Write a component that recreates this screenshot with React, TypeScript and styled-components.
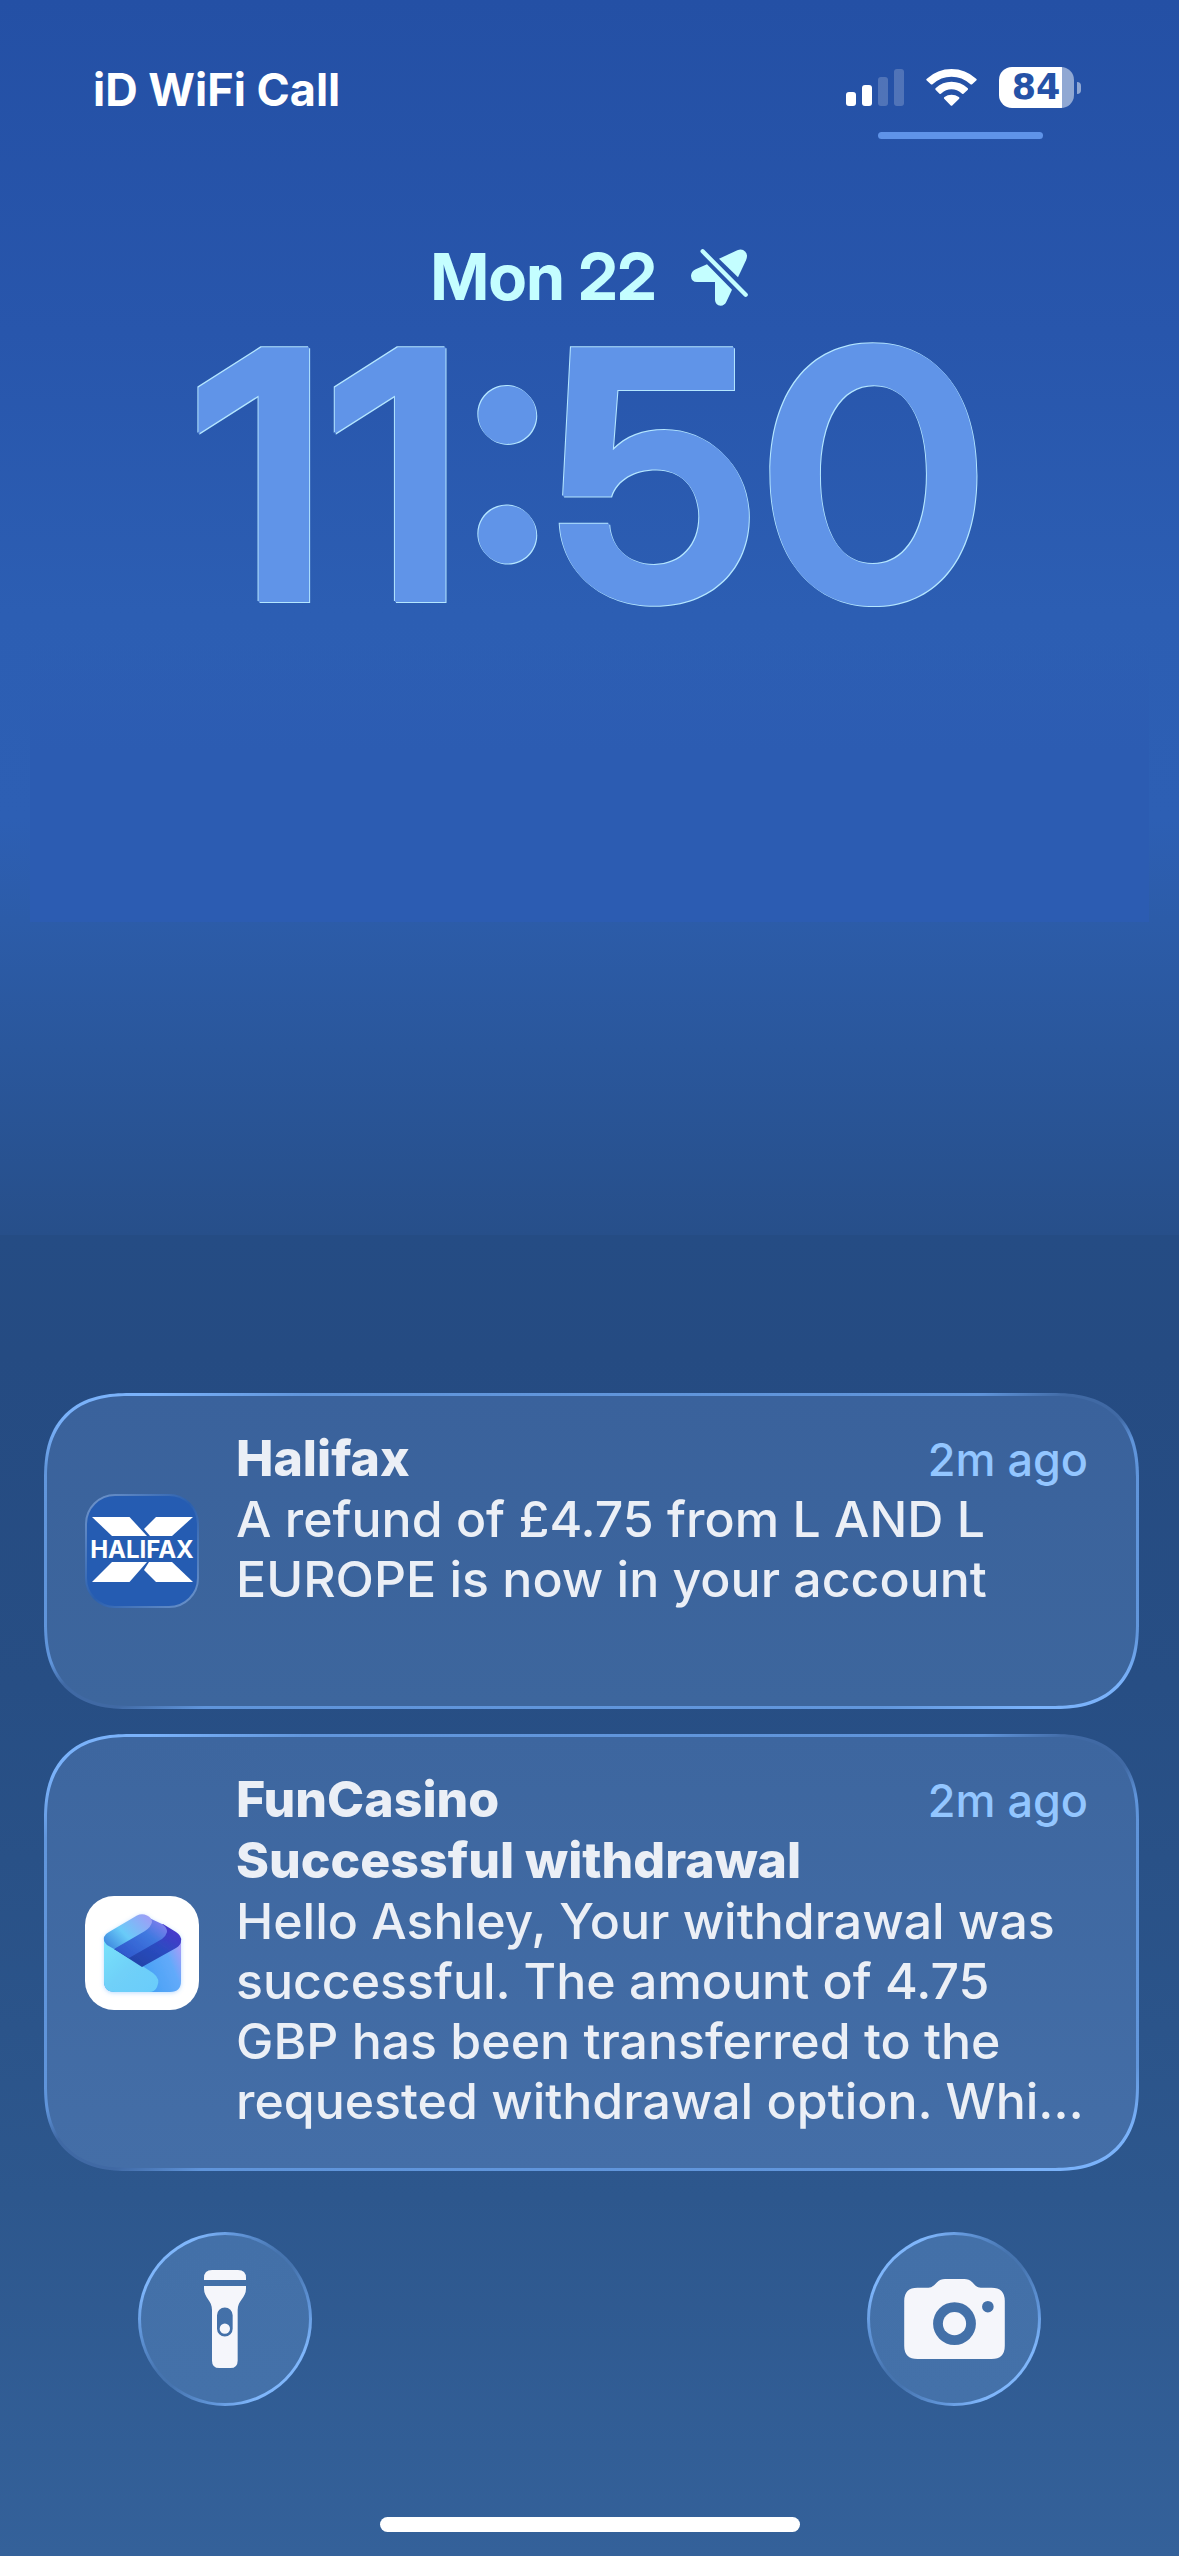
import React from 'react';
import styled, { createGlobalStyle, css } from 'styled-components';

const GlobalStyle = createGlobalStyle`
  *, *::before, *::after { box-sizing: border-box; }
  html, body { margin: 0; padding: 0; background: #34619a; }
  body { font-family: Inter, "Liberation Sans", Arial, sans-serif; }
  h1, h2, h3, p { margin: 0; font: inherit; }
`;

const displayFont = css`
  font-family: "Inter Display", Inter, "Liberation Sans", Arial, sans-serif;
`;

const glassRing = css`
  border: 3px solid transparent;
`;

const Screen = styled.main`
  display: flex;
  flex-direction: column;
  min-height: 100vh;
  padding-bottom: 24px;
  background: linear-gradient(
    180deg,
    #2450a5 0%,
    #2856ac 13%,
    #2c5eb3 24%,
    #2d5fb4 32%,
    #2c5ca9 36%,
    #2a579c 41%,
    #274f8a 48.3%,
    #254c84 48.3%,
    #254b82 53%,
    #274e84 66%,
    #2d578d 86%,
    #34619a 100%
  );
`;

const StatusBar = styled.header`
  display: flex;
  justify-content: space-between;
  align-items: flex-start;
  padding: 67px 98px 0 93px;
`;

const Carrier = styled.span`
  color: #fff;
  font-size: 45px;
  font-weight: 700;
  line-height: 46px;
`;

const StatusSide = styled.div`
  display: flex;
  flex-direction: column;
  align-items: flex-end;
  gap: 24px;
`;

const Indicators = styled.div`
  display: flex;
  align-items: center;
  gap: 22px;
`;

const Battery = styled.div`
  display: flex;
  align-items: center;
  gap: 3px;
`;

const BatteryBody = styled.span`
  display: flex;
  align-items: center;
  justify-content: center;
  width: 75px;
  height: 41px;
  padding-right: 1px;
  border-radius: 13px;
  background: linear-gradient(90deg, #fff 84%, #90a8d3 84%);
  color: #2552a7;
  font-family: "DejaVu Sans", sans-serif;
  font-size: 35px;
  font-weight: 700;
  line-height: 43px;
`;

const BatteryNub = styled.span`
  width: 4px;
  height: 12px;
  border-radius: 0 4px 4px 0;
  background: #90a8d3;
`;

const ActivityBar = styled.span`
  width: 165px;
  height: 7px;
  margin-right: 38px;
  border-radius: 4px;
  background: #5f93e8;
`;

const Clock = styled.section`
  display: flex;
  flex-direction: column;
  align-items: center;
  gap: 14px;
  padding-top: 99px;
`;

const DateRow = styled.p`
  && {
    ${displayFont}
    display: flex;
    align-items: center;
    gap: 34px;
    color: #c4feff;
    font-size: 65px;
    font-weight: 700;
    line-height: 78px;
  }
`;

const Time = styled.h1`
  && {
    ${displayFont}
    color: #6094e8;
    font-size: 350px;
    font-weight: 700;
    line-height: 290px;
    white-space: nowrap;
    text-shadow: -1px -1px 0 #b4e6ff, 1px 1px 0 #b4e6ff;
  }
`;

const WidgetArea = styled.div`
  height: 282px;
  margin: 20px 30px 0;
  background: linear-gradient(180deg, rgba(44, 92, 178, 0), #2c5cb2 40%);
`;

const Notifications = styled.section`
  display: flex;
  flex-direction: column;
  gap: 25px;
  margin-top: auto;
  padding: 0 40px 0 44px;
`;

const Card = styled.article<{ $from: string; $to: string }>`
  ${glassRing}
  display: flex;
  align-items: center;
  gap: 37px;
  min-height: 316px;
  padding: 0 48px 0 38px;
  border-radius: 74px;
  background:
    linear-gradient(${(p) => p.$from}, ${(p) => p.$to}) padding-box,
    linear-gradient(
      to bottom right,
      #7ab2fa 0%, #7ab2fa 5%, #6196dc 12%, #5f94da 43%,
      #4069a4 47%, #4069a4 53%,
      #5f94da 57%, #6196dc 88%, #7ab2fa 95%, #7ab2fa 100%
    ) border-box;

  @supports (corner-shape: superellipse(1.3)) {
    border-radius: 86px;
    corner-shape: superellipse(1.3);
  }
`;

const Content = styled.div`
  flex: 1;
  min-width: 0;
  align-self: stretch;
  padding: 32px 0 37px;
  color: #ebeff6;
  font-size: 50px;
  line-height: 60px;
`;

const CardHead = styled.div`
  display: flex;
  align-items: baseline;
  justify-content: space-between;
`;

const Title = styled.h2`
  && {
    font-size: 50px;
    font-weight: 800;
    line-height: 61px;
  }
`;

const Age = styled.time`
  color: #93c6ff;
  font-size: 45px;
  font-weight: 500;
  line-height: 50px;
`;

const Body = styled.p`
  && {
    font-weight: 500;
    white-space: nowrap;
  }
`;

const AppIcon = styled.svg`
  flex: none;
  width: 114px;
  height: 114px;
`;

const BrandText = styled.text`
  font-family: Inter, "Liberation Sans", sans-serif;
  font-size: 24px;
  font-weight: 700;
`;

const Shortcuts = styled.nav`
  display: flex;
  justify-content: space-between;
  padding: 61px 138px 0;
`;

const RoundButton = styled.button`
  ${glassRing}
  display: grid;
  place-items: center;
  width: 174px;
  height: 174px;
  padding: 0;
  border-radius: 50%;
  background:
    linear-gradient(#4370a8, #4471a9) padding-box,
    linear-gradient(
      135deg,
      #7fb6fb 0%, #7fb6fb 18%, #6398dc 28%,
      #4674af 46%, #4674af 54%,
      #6398dc 72%, #7fb6fb 82%, #7fb6fb 100%
    ) border-box;
`;

const HomeIndicator = styled.div`
  align-self: center;
  width: 420px;
  height: 15px;
  margin-top: 111px;
  border-radius: 8px;
  background: #fff;
`;

function SignalIcon() {
  return (
    <svg width="58" height="37" viewBox="0 0 58 37" fill="#fff" role="img" aria-label="Signal">
      <rect x="0" y="23" width="10" height="14" rx="3" />
      <rect x="16" y="16" width="10" height="21" rx="3" />
      <rect x="32" y="8" width="10" height="29" rx="3" opacity=".2" />
      <rect x="48" y="0" width="10" height="37" rx="3" opacity=".2" />
    </svg>
  );
}

function WifiIcon() {
  return (
    <svg width="51" height="37" viewBox="318 57 152 111" fill="#fff" role="img" aria-label="Wi-Fi">
      <path d="M319 91Q317 88 320 86Q352 57 394 57Q436 57 468 86Q471 88 469 91L456 103Q453 105 450 102Q426 80 394 80Q362 80 338 102Q335 105 332 103Z" />
      <path d="M346 119Q344 116 347 114Q367 95 394 95Q421 95 442 114Q445 116 443 119L430 131Q427 133 424 130Q411 118 394 118Q377 118 364 130Q361 133 358 131Z" />
      <path d="M372 146Q370 143 373 141Q382 134 394 134Q406 134 416 141Q419 143 417 146L397 166Q394 169 391 166Z" />
    </svg>
  );
}

function LocationOffIcon() {
  return (
    <svg width="58" height="58" viewBox="84 82 174 174" fill="#c4feff" role="img" aria-label="Location off">
      <path d="M171 114L226 89Q240 83 250 93Q259 102 252 119L228 170Z" />
      <path d="M135 131L101 146Q87 153 87 166Q88 184 105 184H159V238Q160 254 176 255Q188 254 193 243L210 207Z" />
      <path d="M122 92L251 222" stroke="#c4feff" strokeWidth="13" strokeLinecap="round" />
    </svg>
  );
}

function HalifaxIcon() {
  return (
    <AppIcon viewBox="0 0 114 114" role="img" aria-label="Halifax">
      <defs>
        <linearGradient id="hx-edge" x1="0" y1="0" x2="1" y2="1">
          <stop offset="0" stopColor="#7397cc" />
          <stop offset=".5" stopColor="#2a5fae" />
          <stop offset="1" stopColor="#6e95cb" />
        </linearGradient>
      </defs>
      <rect x="1" y="1" width="112" height="112" rx="29" fill="#255cb2" stroke="url(#hx-edge)" strokeWidth="2" />
      <g fill="#fff">
        <path d="M7 23H44.500L62 42H27Z" />
        <path d="M71 23H108L87 42H65L59 35Z" />
        <BrandText x="57" y="64" textAnchor="middle">HALIFAX</BrandText>
        <path d="M7 88H44.500L62 68H27Z" />
        <path d="M71 88H108L87 68H64L59 76Z" />
      </g>
    </AppIcon>
  );
}

function FunCasinoIcon() {
  return (
    <AppIcon viewBox="0 0 114 114" role="img" aria-label="FunCasino">
      <defs>
        <linearGradient id="fc-right" x1="0" y1=".5" x2="1" y2=".2">
          <stop offset=".4" stopColor="#45a0f4" />
          <stop offset=".8" stopColor="#62aafa" />
          <stop offset="1" stopColor="#a79cf8" />
        </linearGradient>
        <linearGradient id="fc-left" x1="0" y1="0" x2="1" y2="1">
          <stop offset="0" stopColor="#78e2fb" />
          <stop offset=".5" stopColor="#6fd0f8" />
          <stop offset="1" stopColor="#6accfb" />
        </linearGradient>
        <linearGradient id="fc-a" x1="0" y1=".8" x2="1" y2=".1">
          <stop offset="0" stopColor="#3f8ae0" />
          <stop offset=".4" stopColor="#69cbf8" />
          <stop offset="1" stopColor="#a09cf6" />
        </linearGradient>
        <linearGradient id="fc-b" x1="0" y1="1" x2="1" y2="0">
          <stop offset="0" stopColor="#2a50c8" />
          <stop offset=".6" stopColor="#4079e0" />
          <stop offset="1" stopColor="#9a80f2" />
        </linearGradient>
        <linearGradient id="fc-c" x1="0" y1="1" x2="1" y2="0">
          <stop offset="0" stopColor="#1f3f9e" />
          <stop offset=".55" stopColor="#2a4cc0" />
          <stop offset="1" stopColor="#5430d0" />
        </linearGradient>
        <filter id="fc-glow" x="-20%" y="-20%" width="140%" height="140%">
          <feDropShadow dx="0" dy="1" stdDeviation="2" floodColor="#5aa8ff" floodOpacity=".4" />
        </filter>
      </defs>
      <rect width="114" height="114" rx="29" fill="#fff" />
      <g filter="url(#fc-glow)">
        <path d="M19 44L57 40L96 44V85Q96 96 85 96H30Q19 96 19 85Z" fill="url(#fc-right)" />
        <path d="M19 45L68 77Q76 83 72 91Q70 96 64 96H30Q19 96 19 85Z" fill="url(#fc-left)" />
        <path d="M29 53L78 28L91 36Q97 40 96 45Q96 49 91 52L57 71Z" fill="url(#fc-c)" />
        <path d="M29 53L60 20L77 28Q82 31 82 36Q81 40 77 43L44 62Z" fill="url(#fc-b)" />
        <path d="M29 53L22 49Q18 45 19 41Q20 38 24 36L52 19.500Q57 17 62 19.500Q67 22 67 26Q66 31 60 35Z" fill="url(#fc-a)" />
      </g>
    </AppIcon>
  );
}

function FlashlightIcon() {
  return (
    <svg width="42" height="98" viewBox="282 180 126 294" fill="#f5f6fb" aria-hidden="true">
      <path d="M282 210V204Q282 180 306 180H384Q408 180 408 204V210Z" />
      <path
        fillRule="evenodd"
        d="M282 228H408V236C408 264 383 270 383 300V452Q383 474 361 474H328Q306 474 306 452V300C306 270 282 264 282 236ZM321 316V356A23.500 23.500 0 0 0 368 356V316A23.500 23.500 0 0 0 321 316Z"
      />
      <circle cx="344.500" cy="356" r="15.500" />
    </svg>
  );
}

function CameraIcon() {
  return (
    <svg width="101" height="80" viewBox="189 209 303 241" fill="#f5f6fb" aria-hidden="true">
      <path
        fillRule="evenodd"
        d="M229 235H262Q272 235 279 228L288 219Q298 209 312 209H370Q384 209 394 219L404 229Q410 235 420 235H452Q492 235 492 275V410Q492 450 452 450H229Q189 450 189 410V275Q189 235 229 235ZM276 343.500A64.500 64.500 0 0 0 405 343.500A64.500 64.500 0 0 0 276 343.500ZM423.500 292.500A17.500 17.500 0 0 0 458.500 292.500A17.500 17.500 0 0 0 423.500 292.500Z"
      />
      <circle cx="340.500" cy="343.500" r="35" />
    </svg>
  );
}

export default function App() {
  return (
    <>
      <GlobalStyle />
      <Screen>
        <StatusBar>
          <Carrier>iD WiFi Call</Carrier>
          <StatusSide>
            <Indicators>
              <SignalIcon />
              <WifiIcon />
              <Battery>
                <BatteryBody>84</BatteryBody>
                <BatteryNub />
              </Battery>
            </Indicators>
            <ActivityBar />
          </StatusSide>
        </StatusBar>

        <Clock>
          <DateRow>
            <span>Mon 22</span>
            <LocationOffIcon />
          </DateRow>
          <Time>11:50</Time>
        </Clock>
        <WidgetArea />

        <Notifications aria-label="Notifications">
          <Card $from="#3a629c" $to="#3d669d">
            <HalifaxIcon />
            <Content>
              <CardHead>
                <Title>Halifax</Title>
                <Age>2m ago</Age>
              </CardHead>
              <Body>
                A refund of £4.75 from L AND L
                <br />
                EUROPE is now in your account
              </Body>
            </Content>
          </Card>
          <Card $from="#3d669f" $to="#446ea7">
            <FunCasinoIcon />
            <Content>
              <CardHead>
                <Title>FunCasino</Title>
                <Age>2m ago</Age>
              </CardHead>
              <Title as="h3">Successful withdrawal</Title>
              <Body>
                Hello Ashley, Your withdrawal was
                <br />
                successful. The amount of 4.75
                <br />
                GBP has been transferred to the
                <br />
                requested withdrawal option. Whi…
              </Body>
            </Content>
          </Card>
        </Notifications>

        <Shortcuts aria-label="Shortcuts">
          <RoundButton type="button" aria-label="Flashlight">
            <FlashlightIcon />
          </RoundButton>
          <RoundButton type="button" aria-label="Camera">
            <CameraIcon />
          </RoundButton>
        </Shortcuts>
        <HomeIndicator />
      </Screen>
    </>
  );
}
